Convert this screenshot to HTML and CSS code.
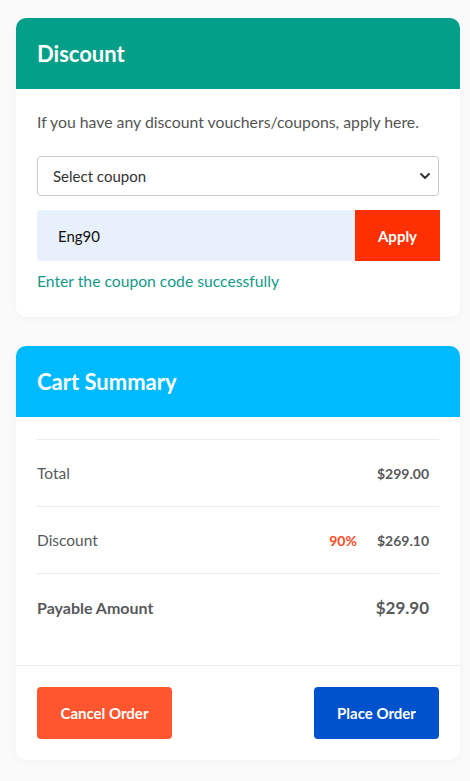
FILE: index.html
```html
<!DOCTYPE html>
<html lang="en">
<head>
<meta charset="utf-8">
<title>Checkout</title>
<link rel="stylesheet" href="styles.css">
</head>
<body>
<main class="page">
  <section class="card">
    <header class="card-head head-teal"><h2>Discount</h2></header>
    <div class="card-body discount-body">
      <p class="hint">If you have any discount vouchers/coupons, apply here.</p>
      <div class="select">
        <span>Select coupon</span>
        <svg class="chev" width="12" height="8" viewBox="0 0 12 8"><path d="M2 2l4 4 4-4" fill="none" stroke="#333" stroke-width="2" stroke-linecap="round" stroke-linejoin="round"/></svg>
      </div>
      <div class="code-row">
        <div class="code-input">Eng90</div>
        <button class="apply">Apply</button>
      </div>
      <p class="success">Enter the coupon code successfully</p>
    </div>
  </section>

  <section class="card">
    <header class="card-head head-cyan"><h2>Cart Summary</h2></header>
    <div class="card-body summary-body">
      <div class="row">
        <span class="label">Total</span>
        <span class="val">$299.00</span>
      </div>
      <div class="row">
        <span class="label">Discount</span>
        <span class="vals"><span class="pct">90%</span><span class="val">$269.10</span></span>
      </div>
      <div class="row row-last">
        <span class="label strong">Payable Amount</span>
        <span class="val big">$29.90</span>
      </div>
    </div>
    <footer class="card-foot">
      <button class="btn btn-cancel">Cancel Order</button>
      <button class="btn btn-place">Place Order</button>
    </footer>
  </section>
</main>
</body>
</html>
```

FILE: styles.css
```css
* { box-sizing: border-box; }
html, body { margin: 0; padding: 0; }
body {
  background: #fafafa;
  font-family: "Lato", "Liberation Sans", sans-serif;
  color: #58595b;
}
.page {
  padding: 18px 10px 20px 16px;
  display: flex;
  flex-direction: column;
  gap: 29px;
}
.card {
  background: #fff;
  border-radius: 10px;
  box-shadow: 0 2px 10px rgba(0,0,0,0.03);
  overflow: hidden;
}
.card-head {
  height: 71px;
  padding: 0 21px;
  display: flex;
  align-items: center;
}
.card-head h2 {
  margin: 0;
  color: #fff;
  font-size: 22px;
  font-weight: 700;
}
.head-teal { background: #049f88; }
.head-cyan { background: #00baff; }
.card-body { padding: 0 21px; }
.discount-body { padding-top: 23px; padding-bottom: 26px; }
.hint {
  margin: 0 0 24px;
  font-size: 15.8px;
  line-height: 20px;
  color: #555;
}
.select {
  height: 40px;
  border: 1px solid #c9c9c9;
  border-radius: 4px;
  display: flex;
  align-items: center;
  justify-content: space-between;
  padding: 0 7px 0 15px;
  font-size: 15px;
  color: #333;
}
.code-row {
  margin-top: 14px;
  display: flex;
  height: 51px;
}
.code-input {
  flex: 1;
  background: #e8f0fc;
  border-radius: 4px 0 0 4px;
  display: flex;
  align-items: center;
  padding-left: 21px;
  font-size: 15px;
  color: #111;
}
.apply {
  width: 85px;
  margin-right: -1px;
  border: 0;
  background: #ff3000;
  color: #fff;
  font: 700 15px "Lato", "Liberation Sans", sans-serif;
}
.success {
  margin: 10px 0 0;
  font-size: 15.7px;
  line-height: 20px;
  color: #13998a;
}
.summary-body { padding-top: 22px; padding-bottom: 25px; }
.row {
  height: 67px;
  border-top: 1px solid #ececec;
  display: flex;
  align-items: center;
  justify-content: space-between;
  padding-right: 10px;
  font-size: 15.5px;
}
.label { color: #58595b; }
.label.strong { font-weight: 700; font-size: 16px; }
.val { font-weight: 700; color: #58595b; font-size: 14px; }
.val.big { font-size: 17px; }
.vals { display: flex; gap: 20px; align-items: baseline; }
.pct { color: #ff4a1c; font-weight: 700; font-size: 14px; }
.card-foot {
  border-top: 1px solid #ececec;
  padding: 21px 21px 21px;
  display: flex;
  justify-content: space-between;
}
.btn {
  height: 52px;
  border: 0;
  border-radius: 4px;
  color: #fff;
  font: 700 15px "Lato", "Liberation Sans", sans-serif;
}
.btn-cancel { width: 135px; background: #ff5630; }
.btn-place { width: 125px; background: #0052cc; }
```
